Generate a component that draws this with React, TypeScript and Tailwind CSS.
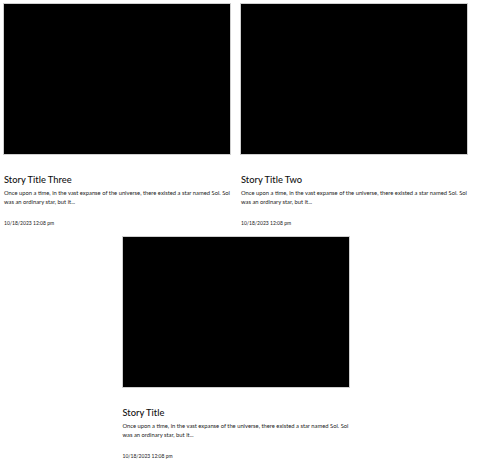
import React from "react";

const stories = [
  { title: "Story Title Three" },
  { title: "Story Title Two" },
  { title: "Story Title" },
];

const body =
  "Once upon a time, in the vast expanse of the universe, there existed a star named Sol. Sol was an ordinary star, but it...";

export default function App() {
  return (
    <div
      className="w-[471px] bg-white pt-[3px] flex flex-wrap justify-center gap-x-[9px] gap-y-[9px]"
      style={{ fontFamily: "Lato, 'Noto Sans', sans-serif" }}
    >
      {stories.map((s) => (
        <div key={s.title} className="w-[228px] flex flex-col">
          <div className="h-[152px] w-full bg-black border border-[#cfcfcf]" />
          <h2 className="mt-[18px] ml-[1px] text-[9.3px] leading-[14px] font-medium text-[#111]">
            {s.title}
          </h2>
          <p className="mt-[2px] ml-[1px] text-[5.8px] leading-[8.5px] text-[#222]">
            {body}
          </p>
          <p className="mt-[13px] ml-[1px] text-[5px] leading-[8px] text-[#222]">
            10/18/2023 12:08 pm
          </p>
        </div>
      ))}
    </div>
  );
}
